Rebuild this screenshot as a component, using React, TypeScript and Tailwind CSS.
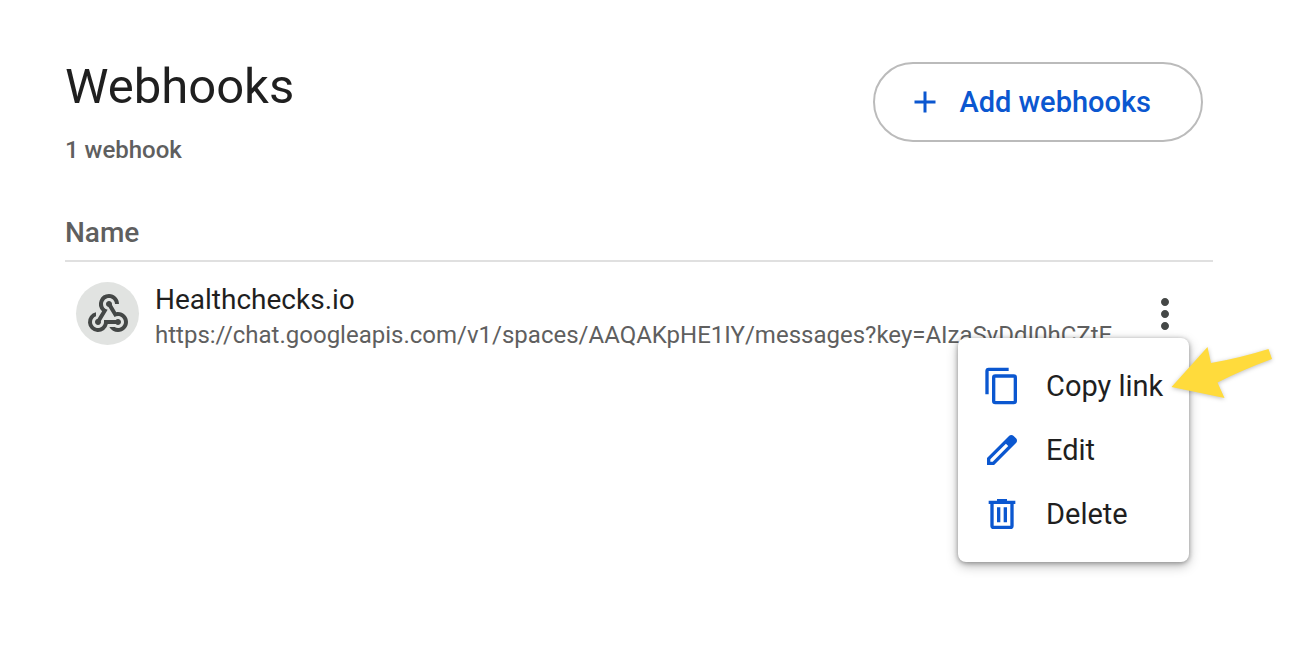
import type { ReactNode } from "react";
import { MdAdd, MdMoreVert, MdWebhook } from "react-icons/md";

type Webhook = { name: string; url: string };

const webhooks: Webhook[] = [
  {
    name: "Healthchecks.io",
    url: "https://chat.googleapis.com/v1/spaces/AAQAKpHE1IY/messages?key=AIzaSyDdI0hCZtE",
  },
];

function CopyIcon() {
  return (
    <svg viewBox="0 0 24 24" className="size-10 shrink-0" fill="none" stroke="currentColor" strokeWidth="2" aria-hidden="true">
      <path d="M3 17V3q0-1 1-1H16" />
      <rect x="7" y="6" width="13" height="16" rx="1" />
    </svg>
  );
}

function EditIcon() {
  return (
    <svg viewBox="0 0 24 24" className="size-10 shrink-0" fill="currentColor" fillRule="evenodd" aria-hidden="true">
      <path d="M3 21v-4.25L16.2 3.57q.6-.57 1.4-.57t1.4.57l1.4 1.43q.6.6.6 1.4t-.6 1.4L7.25 21ZM5 19h1.4L15.75 9.65l-1.4-1.4L5 17.6Z" />
    </svg>
  );
}

function DeleteIcon() {
  return (
    <svg viewBox="0 0 24 24" className="size-10 shrink-0" fill="currentColor" fillRule="evenodd" aria-hidden="true">
      <path d="M4 4h5V3h6v1h5v2h-1v13q0 2-2 2H7q-2 0-2-2V6H4ZM7 6v13h10V6ZM9 8h2v9H9ZM13 8h2v9h-2Z" />
    </svg>
  );
}

function PointerArrow() {
  return (
    <svg
      viewBox="0 0 104 56"
      className="pointer-events-none absolute top-[7px] left-[212px] h-14 w-[104px] overflow-visible drop-shadow-[0_1px_2px_rgba(0,0,0,0.25)]"
      aria-hidden="true"
    >
      <path d="M1.5 42 37.5 2l3.5 16Q70 13 98.500 4l3.500 10Q72 25 47.500 37.500l7 15.500Z" fill="#ffdb3c" />
    </svg>
  );
}

function MenuItem({ icon, label }: { icon: ReactNode; label: string }) {
  return (
    <button type="button" role="menuitem" className="flex h-16 w-full items-center gap-6 px-6 text-left text-[29px] whitespace-nowrap text-[#1f1f1f]">
      <span className="text-[#0b57d0]">{icon}</span>
      <span className="pt-0.5">{label}</span>
    </button>
  );
}

function RowMenu({ name }: { name: string }) {
  return (
    <div className="relative mt-2 shrink-0">
      <button type="button" aria-label={`Options for ${name}`} aria-haspopup="menu" aria-expanded="true" className="block text-[#444746]">
        <MdMoreVert className="size-12" />
      </button>
      <div className="absolute top-full right-0 w-[231px]">
        <div role="menu" className="rounded-lg bg-white py-4 shadow-[0_4px_12px_rgba(0,0,0,0.25),0_1px_5px_rgba(0,0,0,0.35)]">
          <MenuItem icon={<CopyIcon />} label="Copy link" />
          <MenuItem icon={<EditIcon />} label="Edit" />
          <MenuItem icon={<DeleteIcon />} label="Delete" />
        </div>
        <PointerArrow />
      </div>
    </div>
  );
}

export default function App() {
  return (
    <main className="min-h-screen bg-white pt-[58px] pr-[89px] pl-[65px] font-['Roboto',sans-serif] text-[#1f1f1f]">
      <header className="flex items-start justify-between pr-[10px]">
        <div>
          <h1 className="text-[49px] leading-[58px]">Webhooks</h1>
          <p className="mt-[18px] text-[24px] leading-8 font-medium text-[#5f5f5f]">1 webhook</p>
        </div>
        <button
          type="button"
          className="mt-1 flex h-20 items-center gap-4 rounded-full border-2 border-[#bbbbbb] pr-[50px] pl-8 text-[29px] font-medium text-[#0b57d0]"
        >
          <MdAdd className="size-9" />
          <span className="pt-0.5">Add webhooks</span>
        </button>
      </header>

      <table className="mt-12 w-full table-fixed">
        <thead>
          <tr className="border-b-2 border-[#e0e0e0]">
            <th scope="col" className="pb-2 text-left text-[28px] leading-[38px] font-medium text-[#5f5f5f]">
              Name
            </th>
          </tr>
        </thead>
        <tbody>
          {webhooks.map((hook) => (
            <tr key={hook.url}>
              <td className="pt-5 pr-6 pl-[11px]">
                <div className="flex items-start gap-4">
                  <span className="flex size-[63px] shrink-0 items-center justify-center rounded-full bg-[#e1e3e1] text-[#444746]">
                    <MdWebhook className="size-12" />
                  </span>
                  <div className="min-w-0 flex-1">
                    <p className="text-[28px] leading-9">{hook.name}</p>
                    <p className="truncate text-[24px] leading-[34px] text-[#5f5f5f]">{hook.url}</p>
                  </div>
                  <RowMenu name={hook.name} />
                </div>
              </td>
            </tr>
          ))}
        </tbody>
      </table>
    </main>
  );
}
